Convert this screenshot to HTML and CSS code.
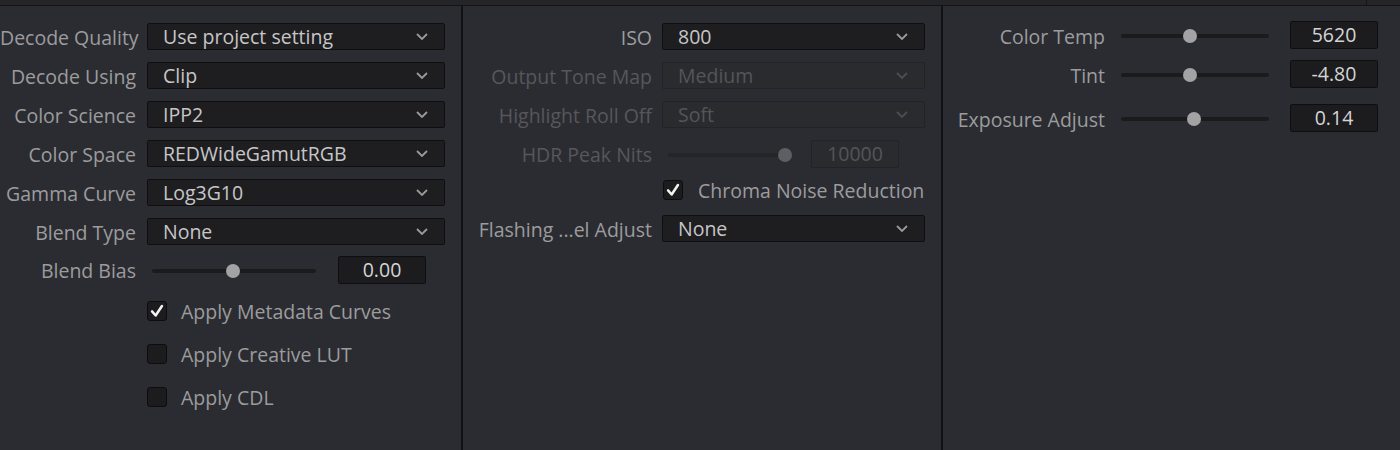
FILE: index.html
```html
<!DOCTYPE html>
<html>
<head>
<meta charset="utf-8">
<link rel="stylesheet" href="styles.css">
</head>
<body>
<div class="topbar"><div class="topbar-left"></div><div class="topbar-right"></div></div>
<div class="panels">
  <section class="col col-left">
    <div class="row"><label class="lbl">Decode Quality</label><div class="dd"><span>Use project setting</span><svg class="chev" viewBox="0 0 12 7"><path d="M1 1 L6 6 L11 1"/></svg></div></div>
    <div class="row"><label class="lbl">Decode Using</label><div class="dd"><span>Clip</span><svg class="chev" viewBox="0 0 12 7"><path d="M1 1 L6 6 L11 1"/></svg></div></div>
    <div class="row"><label class="lbl">Color Science</label><div class="dd"><span>IPP2</span><svg class="chev" viewBox="0 0 12 7"><path d="M1 1 L6 6 L11 1"/></svg></div></div>
    <div class="row"><label class="lbl">Color Space</label><div class="dd"><span>REDWideGamutRGB</span><svg class="chev" viewBox="0 0 12 7"><path d="M1 1 L6 6 L11 1"/></svg></div></div>
    <div class="row"><label class="lbl">Gamma Curve</label><div class="dd"><span>Log3G10</span><svg class="chev" viewBox="0 0 12 7"><path d="M1 1 L6 6 L11 1"/></svg></div></div>
    <div class="row"><label class="lbl">Blend Type</label><div class="dd"><span>None</span><svg class="chev" viewBox="0 0 12 7"><path d="M1 1 L6 6 L11 1"/></svg></div></div>
    <div class="row row-slider"><label class="lbl">Blend Bias</label>
      <div class="slider slider-left"><div class="track"></div><div class="knob" style="left:81px"></div></div>
      <div class="val">0.00</div>
    </div>
    <div class="checks">
      <div class="chk-row"><span class="chk on"><svg viewBox="0 0 20 20"><path d="M4.5 10.5 L8.5 15 L15.5 4.5"/></svg></span><span class="chk-text">Apply Metadata Curves</span></div>
      <div class="chk-row"><span class="chk"></span><span class="chk-text">Apply Creative LUT</span></div>
      <div class="chk-row"><span class="chk"></span><span class="chk-text">Apply CDL</span></div>
    </div>
  </section>
  <div class="divider"></div>
  <section class="col col-mid">
    <div class="row"><label class="lbl">ISO</label><div class="dd"><span>800</span><svg class="chev" viewBox="0 0 12 7"><path d="M1 1 L6 6 L11 1"/></svg></div></div>
    <div class="row disabled"><label class="lbl">Output Tone Map</label><div class="dd"><span>Medium</span><svg class="chev" viewBox="0 0 12 7"><path d="M1 1 L6 6 L11 1"/></svg></div></div>
    <div class="row disabled"><label class="lbl">Highlight Roll Off</label><div class="dd"><span>Soft</span><svg class="chev" viewBox="0 0 12 7"><path d="M1 1 L6 6 L11 1"/></svg></div></div>
    <div class="row row-slider disabled"><label class="lbl">HDR Peak Nits</label>
      <div class="slider slider-mid"><div class="track"></div><div class="knob" style="left:117px"></div></div>
      <div class="val">10000</div>
    </div>
    <div class="chk-row chk-mid"><span class="chk on"><svg viewBox="0 0 20 20"><path d="M4.5 10.5 L8.5 15 L15.5 4.5"/></svg></span><span class="chk-text">Chroma Noise Reduction</span></div>
    <div class="row row-flash"><label class="lbl">Flashing ...el Adjust</label><div class="dd"><span>None</span><svg class="chev" viewBox="0 0 12 7"><path d="M1 1 L6 6 L11 1"/></svg></div></div>
  </section>
  <div class="divider"></div>
  <section class="col col-right">
    <div class="row row-slider"><label class="lbl">Color Temp</label>
      <div class="slider slider-right"><div class="track"></div><div class="knob" style="left:69px"></div></div>
      <div class="val">5620</div>
    </div>
    <div class="row row-slider"><label class="lbl">Tint</label>
      <div class="slider slider-right"><div class="track"></div><div class="knob" style="left:69px"></div></div>
      <div class="val">-4.80</div>
    </div>
    <div class="row row-slider row-exp"><label class="lbl">Exposure Adjust</label>
      <div class="slider slider-right"><div class="track"></div><div class="knob" style="left:73px"></div></div>
      <div class="val">0.14</div>
    </div>
  </section>
</div>
</body>
</html>
```

FILE: styles.css
```css
* { box-sizing: border-box; }
html, body {
  margin: 0;
  padding: 0;
  width: 1400px;
  height: 450px;
  overflow: hidden;
  background: #2b2c31;
  font-family: "Open Sans", "Noto Sans", "DejaVu Sans", sans-serif;
  font-size: 19.5px;
  color: #9c9c9e;
}
.topbar {
  height: 6px;
  background: #252529;
  border-bottom: 1px solid #141416;
  display: flex;
}
.topbar-left { width: 1367px; height: 100%; border-right: 1px solid #141416; }
.topbar-right { flex: 1; }

.panels {
  display: flex;
  height: 444px;
}
.divider {
  width: 2px;
  background: #121214;
  flex: none;
}
.col {
  display: flex;
  flex-direction: column;
  flex: none;
}
.col-left { width: 461px; padding-top: 17px; }
.col-mid { width: 478px; padding-top: 17px; }
.col-right { flex: 1; padding-top: 15px; }

.row {
  display: flex;
  align-items: center;
  height: 27px;
  margin-bottom: 12px;
}
.lbl {
  flex: none;
  text-align: right;
  white-space: nowrap;
  line-height: 27px;
  padding-top: 1px;
}
.col-left .lbl { width: 136px; margin-right: 11px; }
.col-mid .lbl { width: 189px; margin-right: 10px; }
.col-right .lbl { width: 162px; margin-right: 16px; padding-top: 3px; }

.dd {
  display: flex;
  align-items: center;
  justify-content: space-between;
  height: 27px;
  background: #1e1e20;
  border: 1px solid #0f0f11;
  border-radius: 2px;
  padding: 0 16px 0 15px;
  color: #c6c6c8;
}
.col-left .dd { width: 298px; }
.col-mid .dd { width: 263px; }
.chev {
  width: 12px;
  height: 7px;
  fill: none;
  stroke: #9a9a9c;
  stroke-width: 1.8;
}

.disabled .lbl { color: #56575c; }
.disabled .dd {
  background: #2a2b2f;
  border-color: #222326;
  color: #54555a;
}
.disabled .chev { stroke: #4c4d52; }

.slider {
  position: relative;
  height: 27px;
  flex: none;
}
.track {
  position: absolute;
  left: 0; right: 0;
  top: 12px;
  height: 4px;
  border-radius: 2px;
  background: #1b1b1d;
}
.knob {
  position: absolute;
  top: 7px;
  width: 14px;
  height: 14px;
  margin-left: -7px;
  border-radius: 50%;
  background: #a3a3a5;
}
.disabled .knob { background: #5e5f63; }
.disabled .track { background: #242528; }

.val {
  flex: none;
  width: 88px;
  height: 28px;
  background: #1c1c1e;
  border: 1px solid #0e0e10;
  border-radius: 2px;
  color: #d4d4d6;
  text-align: center;
  line-height: 26px;
}
.disabled .val {
  background: #2a2b2f;
  border-color: #222326;
  color: #54555a;
}

.col-left .row-slider { margin-top: -1px; height: 28px; }
.slider-left { width: 164px; margin-left: 5px; margin-right: 22px; }
.slider-mid { width: 123px; margin-left: 6px; margin-right: 20px; }
.col-mid .row-slider { height: 28px; margin-bottom: 12px; }
.slider-right { width: 148px; margin-right: 21px; }
.col-right .row-slider { height: 28px; margin-bottom: 11px; }
.col-right .row-exp { margin-top: 5px; }

.checks {
  display: flex;
  flex-direction: column;
  gap: 23px;
  padding-left: 147px;
  margin-top: 5px;
}
.chk-row {
  display: flex;
  align-items: center;
  height: 20px;
}
.chk {
  width: 20px;
  height: 20px;
  flex: none;
  background: #1c1c1e;
  border: 1px solid #0d0d0f;
  border-radius: 3px;
  margin-right: 14px;
  display: flex;
  align-items: center;
  justify-content: center;
}
.chk svg {
  width: 20px;
  height: 20px;
  fill: none;
  stroke: #f2f2f2;
  stroke-width: 2.8;
  stroke-linecap: round;
  stroke-linejoin: round;
}
.chk-text { color: #9c9c9e; white-space: nowrap; }
.chk-mid { padding-left: 200px; margin-top: 0; margin-bottom: 15px; }
.chk-mid .chk { margin-right: 15px; }
.row-flash { margin-top: 0; }
```
